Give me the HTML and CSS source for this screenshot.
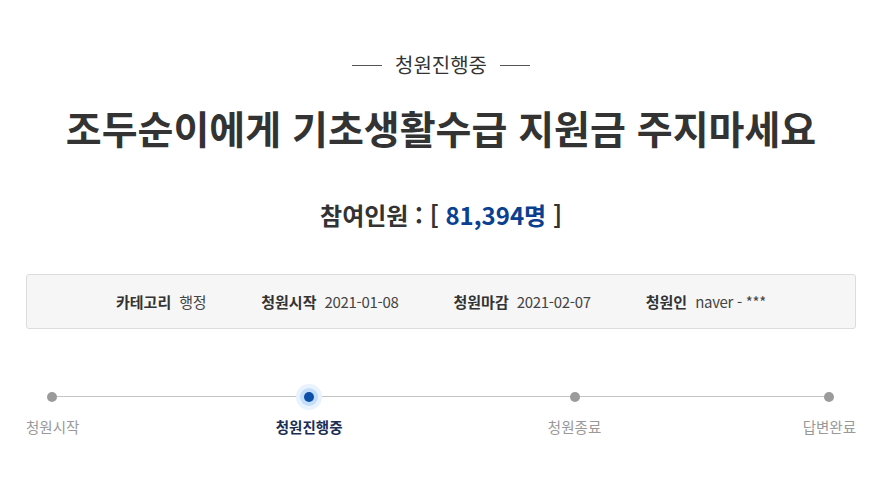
FILE: index.html
```html
<!DOCTYPE html>
<html lang="ko">
<head>
<meta charset="utf-8">
<link rel="stylesheet" href="styles.css">
</head>
<body>
<div class="page">
  <div class="status"><span class="dash"></span><span class="status-text">청원진행중</span><span class="dash"></span></div>
  <h1 class="title">조두순이에게 기초생활수급 지원금 주지마세요</h1>
  <div class="count">참여인원 : [ <span class="num">81,394명</span> ]</div>
  <div class="info">
    <div class="item"><span class="label">카테고리</span><span class="value">행정</span></div>
    <div class="item"><span class="label">청원시작</span><span class="value">2021-01-08</span></div>
    <div class="item"><span class="label">청원마감</span><span class="value">2021-02-07</span></div>
    <div class="item"><span class="label">청원인</span><span class="value">naver - ***</span></div>
  </div>
  <div class="progress">
    <div class="step"><span class="dot"></span><span class="step-label">청원시작</span></div>
    <div class="step active"><span class="dot"></span><span class="step-label">청원진행중</span></div>
    <div class="step closed"><span class="dot"></span><span class="step-label">청원종료</span></div>
    <div class="step"><span class="dot"></span><span class="step-label">답변완료</span></div>
  </div>
</div>
</body>
</html>
```
FILE: styles.css
```css
* { box-sizing: border-box; }
html, body { margin: 0; padding: 0; background: #fff; }
body {
  font-family: "Noto Sans CJK KR", "Noto Sans", sans-serif;
  color: #333;
}
.page {
  width: 830px;
  margin: 0 26px;
  padding-top: 52px;
}
.status {
  display: flex;
  justify-content: center;
  align-items: center;
  gap: 13px;
  height: 26px;
  font-size: 20px;
  line-height: 26px;
  color: #333;
}
.dash {
  display: block;
  width: 30px;
  height: 1px;
  background: #555;
}
.title {
  margin: 24px 0 0;
  text-align: center;
  font-size: 39px;
  line-height: 50px;
  font-weight: 700;
  color: #333;
}
.count {
  margin-top: 46px;
  text-align: center;
  font-size: 24px;
  line-height: 34px;
  font-weight: 700;
  color: #333;
}
.num { color: #0b3f8f; }
.info {
  margin-top: 42px;
  height: 55px;
  border: 1px solid #dcdcdc;
  border-radius: 3px;
  background: #f6f6f6;
  display: flex;
  justify-content: center;
  align-items: center;
  gap: 55px;
  font-size: 15px;
  line-height: 20px;
}
.item { display: flex; align-items: center; gap: 8px; }
.label { font-weight: 700; color: #333; }
.value { color: #444; letter-spacing: -0.3px; }
.progress {
  position: relative;
  margin-top: 57px;
  display: flex;
  justify-content: space-between;
}
.progress::before {
  content: "";
  position: absolute;
  left: 27px;
  right: 28px;
  top: 10px;
  height: 1px;
  background: #c4c4c4;
}
.step {
  position: relative;
  display: flex;
  flex-direction: column;
  align-items: center;
}
.step:first-child { margin-left: -2px; }
.step.active { margin-right: 9px; }
.step.closed { margin-right: 5px; }
.dot {
  display: block;
  width: 10px;
  height: 10px;
  margin: 6px 0 6px;
  border-radius: 50%;
  background: #9b9b9b;
}
.step.active .dot {
  background: #0b4fa8;
  box-shadow: 0 0 0 4px #c3ddfa, 0 0 0 8px #e9f3fe;
}
.step-label {
  margin-top: 9px;
  font-size: 14.5px;
  line-height: 20px;
  color: #999;
}
.step:first-child .step-label { margin-left: 2px; }
.step.active .step-label {
  font-weight: 700;
  color: #1b2f55;
}
```
